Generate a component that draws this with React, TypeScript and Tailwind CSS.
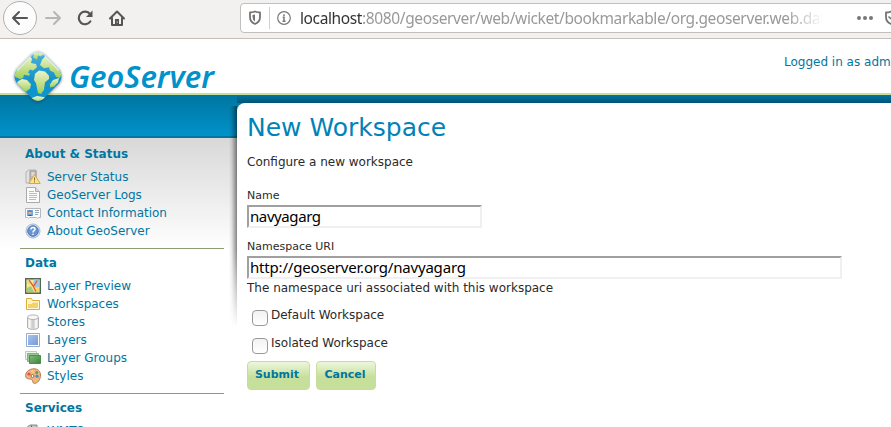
import React from "react";

const dejavu = "font-['DejaVu_Sans',sans-serif]";
const ubuntu = "font-['Noto_Sans','Open_Sans',sans-serif]";

const ServerIcon = () => (
  <svg width="16" height="16" viewBox="0 0 16 16">
    <path d="M1 3l3-2h7v11l-3 2H1z" fill="#e2e2e2" stroke="#b4b4b4" />
    <path d="M5 2h6v11H5z" fill="#c0c0c0" stroke="#999" />
    <path d="M6.500 4h3M6.500 6h3" stroke="#f3f3f3" />
    <path d="M9.500 5.500L15.200 14.500H3.800z" fill="#fde48a" stroke="#dda24a" />
    <path d="M9.500 8.500v3M9.500 12.200v1.200" stroke="#8a6526" />
  </svg>
);
const PageIcon = () => (
  <svg width="16" height="16" viewBox="0 0 16 16">
    <path d="M1.500.5h9l4 4v11h-13z" fill="#fbfbfb" stroke="#aaa" />
    <path d="M10.500.5v4h4" fill="#ddd" stroke="#aaa" />
    <path d="M4 4.500h5M4 6.500h8M4 8.500h8M4 10.500h8M4 12.500h7" stroke="#bbb" />
  </svg>
);
const CardIcon = () => (
  <svg width="16" height="16" viewBox="0 0 16 16">
    <path d="M.5 3.500h15v9h-2l-1 1-1-1h-7l-1 1-1-1h-2z" fill="#fafafa" stroke="#b4b8bd" />
    <path d="M2 5h6v6H2z" fill="#6ca8e8" />
    <circle cx="5" cy="7.500" r="1.600" fill="#e9b18e" />
    <path d="M3.500 6.700q1.500-2 3 0" stroke="#7d4a28" fill="none" />
    <path d="M2.800 11q2.200-2.500 4.400 0z" fill="#2b5b9e" />
    <path d="M10 5.500h4M10 7.500h4M10 9.500h3" stroke="#9aa6b3" />
  </svg>
);
const HelpIcon = () => (
  <svg width="16" height="16" viewBox="0 0 16 16">
    <circle cx="8" cy="8" r="7" fill="#dce8f8" stroke="#a5b7d1" />
    <circle cx="8" cy="8" r="5.300" fill="#6b94cf" stroke="#4b78b9" />
    <path d="M6 6.500q0-2 2-2t2 1.700q0 1-1.200 1.600Q8 8.300 8 9.500M8 10.700v1.300" fill="none" stroke="#fff" strokeWidth="1.500" />
  </svg>
);
const MapIcon = () => (
  <svg width="16" height="16" viewBox="0 0 16 16">
    <path d="M.7.7h14.600v14.600H.7z" fill="#f6e988" stroke="#536951" strokeWidth="1.400" />
    <path d="M2 2h4v4H2z" fill="#e0e38c" />
    <path d="M9 1.500h5.500v7L11 10 8 6z" fill="#a0c5e5" />
    <path d="M2 14v-4l4-2 3 6z" fill="#9dce7c" />
    <path d="M10 12l4-3v5h-4z" fill="#f5d75e" />
    <path d="M4 2.200l4.500 6.300M12.200 2.500L8.500 8.500l2.300 5" fill="none" stroke="#e4573d" strokeWidth="1.300" />
  </svg>
);
const FolderIcon = () => (
  <svg width="16" height="16" viewBox="0 0 16 16">
    <path d="M1.500 13.500v-11h5l1 2h7v9z" fill="#fff2bd" stroke="#dcac43" />
    <path d="M2.500 12.500v-5h4l1-1.500h6v6.500z" fill="#f6d263" stroke="#fffbe0" />
  </svg>
);
const StoreIcon = () => (
  <svg width="16" height="16" viewBox="0 0 16 16">
    <path d="M2.500 3v10q0 2.300 5.500 2.300t5.500-2.300V3" fill="#e6e6e6" stroke="#b0b0b0" />
    <path d="M4.500 5v9M11 5.500v8.500" stroke="#fafafa" strokeWidth="1.500" />
    <path d="M8 5.500v9" stroke="#cecece" strokeWidth="3" />
    <ellipse cx="8" cy="3.200" rx="5.500" ry="2.300" fill="#f8f8f8" stroke="#b4b4b4" />
  </svg>
);
const LayerIcon = () => (
  <svg width="16" height="16" viewBox="0 0 16 16">
    <defs><linearGradient id="layer" x2="1" y2="1"><stop stopColor="#a9c2ea" /><stop offset="1" stopColor="#769bd6" /></linearGradient></defs>
    <path d="M1.500 1.500h13v13h-13z" fill="#fff" stroke="#90acd9" />
    <path d="M3 3h10v10H3z" fill="url(#layer)" />
  </svg>
);
const GroupIcon = () => (
  <svg width="16" height="16" viewBox="0 0 16 16">
    <defs><linearGradient id="group" x2="1" y2="1"><stop stopColor="#88bb80" /><stop offset="1" stopColor="#39843a" /></linearGradient></defs>
    <path d="M.5 1.500h11v8H.5z" fill="#eaf4e7" stroke="#b4d2ad" />
    <path d="M2.500 3.500h11v8h-11z" fill="#9bc896" stroke="#80b47a" />
    <path d="M4.500 5.500h11v8h-11z" fill="url(#group)" stroke="#488f48" />
  </svg>
);
const PaletteIcon = () => (
  <svg width="16" height="16" viewBox="0 0 16 16">
    <path d="M9 .8c4 0 6.500 2.600 6.500 6.200 0 4.800-3 8.400-6 8.400-2.300 0-1.400-3.200-3-4C4.700 10.700.6 11.500.6 7.700.6 3.600 4.500.8 9 .8z" fill="#edb489" stroke="#c07a4c" />
    <circle cx="4" cy="6" r="1.600" fill="#e65142" />
    <circle cx="7.500" cy="3.500" r="1.400" fill="#f5d26b" />
    <circle cx="11.700" cy="4.500" r="1.600" fill="#54a957" />
    <circle cx="12" cy="8.200" r="1.600" fill="#468fc2" />
    <circle cx="10.800" cy="12" r="1.500" fill="#e9c74c" />
    <circle cx="7.500" cy="8" r="1.500" fill="#fff" stroke="#a8613e" />
  </svg>
);
const TilesIcon = () => (
  <svg width="16" height="16" viewBox="0 0 16 16">
    <path d="M1 5l4-3h7v12H1z" fill="#c4c4c4" stroke="#888" />
    <path d="M6.500 2.500v12M8 4.500h3M8 6.500h3" stroke="#666" />
    <path d="M3 5h3v8H3z" fill="#eee" />
  </svg>
);

type Item = [string, () => React.JSX.Element];
const sections: { title: string; items: Item[] }[] = [
  { title: "About & Status", items: [["Server Status", ServerIcon], ["GeoServer Logs", PageIcon], ["Contact Information", CardIcon], ["About GeoServer", HelpIcon]] },
  { title: "Data", items: [["Layer Preview", MapIcon], ["Workspaces", FolderIcon], ["Stores", StoreIcon], ["Layers", LayerIcon], ["Layer Groups", GroupIcon], ["Styles", PaletteIcon]] },
  { title: "Services", items: [["WMTS", TilesIcon]] },
];

function Shield({ checked = false }: { checked?: boolean }) {
  return (
    <svg width="14" height="16" viewBox="0 0 14 16" className="shrink-0">
      <path d="M7 1.500q2.500 1 5 1v4.500q0 5-5 7-5-2-5-7V2.500q2.500 0 5-1z" fill="none" stroke="#737373" strokeWidth="1.800" strokeLinejoin="round" />
      {checked ? <path d="M4.500 6.500l2 2 3.500-3" fill="none" stroke="#737373" strokeWidth="1.500" /> : <path d="M7 4.500v7q-2.500-1.500-2.500-5V5z" fill="#737373" />}
    </svg>
  );
}

function Toolbar() {
  return (
    <div className="flex h-[39px] shrink-0 border-b border-[#c8beb8] bg-[#f2f1f0]">
      <svg width="240" height="38" viewBox="0 0 240 38" fill="none" className="shrink-0">
        <circle cx="20" cy="18" r="16.500" fill="#fcfcfc" stroke="#b2b0ae" />
        <g strokeWidth="2" strokeLinecap="round" strokeLinejoin="round">
          <path d="M27 18H13M19 12l-6 6 6 6" stroke="#555" />
          <path d="M46 18h14M54 12l6 6-6 6" stroke="#b7b6b5" />
        </g>
        <path d="M90 14a6.300 6.300 0 1 0 .3 7.500" stroke="#555" strokeWidth="2.200" strokeLinecap="round" />
        <path d="M92.500 10.500v6.500H86z" fill="#555" />
        <path d="M110 18.500l7-7 7 7M112 17.500V25h10v-7.500" stroke="#555" strokeWidth="2" strokeLinecap="round" strokeLinejoin="round" />
        <path d="M115 25v-6h4v6z" fill="#555" />
        <path d="M117.200 21.500v1.200" stroke="#eee" />
      </svg>
      <div className="mt-[3px] flex h-[30px] w-[700px] shrink-0 items-center rounded-[4px] border border-[#c1bebb] bg-white pl-[7px]">
        <Shield />
        <div className="ml-[7px] h-[22px] w-px bg-[#d0d0d0]" />
        <svg width="14" height="14" viewBox="0 0 14 14" fill="none" stroke="#777" className="ml-[7px] shrink-0">
          <circle cx="7" cy="7" r="6.300" strokeWidth="1.200" />
          <path d="M7 3.200v1.700M5.700 6.200H7v4M5.500 10.200h3" strokeWidth="1.500" />
        </svg>
        <div className={`ml-[9px] w-[523px] shrink-0 whitespace-nowrap text-[15.5px] leading-[26px] tracking-[-0.38px] text-[#999] ${ubuntu} [mask-image:linear-gradient(to_right,black_93%,transparent)]`}>
          <span className="text-[#333]">localhost</span>:8080/geoserver/web/wicket/bookmarkable/org.geoserver.web.dat
        </div>
        <svg width="16" height="6" viewBox="0 0 16 6" fill="#777" className="ml-[34px] shrink-0"><circle cx="2" cy="3" r="2" /><circle cx="8" cy="3" r="2" /><circle cx="14" cy="3" r="2" /></svg>
        <div className="ml-[11px]"><Shield checked /></div>
      </div>
    </div>
  );
}

function Globe() {
  return (
    <svg width="56" height="62" viewBox="0 0 56 58" preserveAspectRatio="none" className="shrink-0">
      <defs>
        <linearGradient id="ocean" x2="0" y2="1"><stop stopColor="#55b7dc" /><stop offset=".5" stopColor="#1593cc" /><stop offset="1" stopColor="#0797d3" /></linearGradient>
        <linearGradient id="land" x2="0" y2="1"><stop stopColor="#edf3c9" /><stop offset="1" stopColor="#a0cf58" /></linearGradient>
        <clipPath id="diamond"><path d="M22 6q6-4 12 0l15 14q5 7 0 13L34 47q-6 5-12 0L7 33q-5-6 0-13z" /></clipPath>
        <filter id="shade" x="-20%" y="-20%" width="140%" height="140%"><feDropShadow dx="0" dy=".5" stdDeviation="1.500" floodColor="#333" floodOpacity=".7" /></filter>
      </defs>
      <g filter="url(#shade)">
        <g clipPath="url(#diamond)">
          <path d="M0 0h56v58H0z" fill="url(#ocean)" />
          <g fill="url(#land)">
            <path d="M21 5l3-2h7l3 2-3 3-3-1-1 4-4-2 1-3z" />
            <path d="M5 21L16 10l4-2 2 2-1 4 5 1 1 3-4 3-3-1-2 3 2 1-1 2-5-1-1 3-3 1-5-2z" />
            <path d="M8 31l4-2 5 1 4 4-1 4-4 3-3-1-6-7z" />
            <path d="M25 24l4-3 6 1 4 4 0 3-4 3-1 7-3 4-3-1-2-9-2-3z" />
            <path d="M30 16l2-5 4-4 16 16-2 5-4-1-2-4-4-2-1-3-5 1z" />
            <path d="M40 34l3-4 6-2-1 4-4 4-4 1z" />
            <path d="M21 47l6-2 8 1-3 4-4 1z" />
          </g>
          <path d="M7 21L22 6q6-4 12 0l15 15" fill="none" stroke="#e7f8ff" strokeOpacity=".6" strokeWidth="2" />
        </g>
      </g>
    </svg>
  );
}

function Sidebar() {
  return (
    <nav className="h-[289px] w-[237px] shrink-0 overflow-hidden bg-[linear-gradient(to_bottom,#d8d8d8,#fff_112px)] pl-5 pr-[13px] pt-[2px]">
      {sections.map((s) => (
        <section key={s.title} className="border-b border-[#8e9c74] pb-2 pl-[5px]">
          <h2 className="h-[28px] pt-[5px] text-[12px] font-bold leading-[18px] text-[#0076a1]">{s.title}</h2>
          {s.items.map(([label, Icon]) => (
            <a key={label} className="flex h-[18px] items-center gap-[6px] whitespace-nowrap text-[12px] text-[#0076a1]"><Icon />{label}</a>
          ))}
        </section>
      ))}
    </nav>
  );
}

const inset = "border-2 border-b-[#f0f0f0] border-l-[#a0a0a0] border-r-[#f0f0f0] border-t-[#a0a0a0] bg-white";

function Check({ label }: { label: string }) {
  return (
    <label className="flex h-[28px] items-start gap-[3px] pl-[5px]">
      <span className="mt-[4px] h-[16px] w-[16px] rounded-[4px] border border-[#999] bg-[linear-gradient(#f2f2f2,#fff)]" />
      <span className="leading-[18px]">{label}</span>
    </label>
  );
}

function Workspace() {
  return (
    <main className="relative w-[654px] shrink-0 rounded-tl-[8px] bg-white pl-[10px] text-[12px] text-[#2a2a2a]">
      <div className="absolute -left-[8px] top-[3px] h-[221px] w-[8px] bg-[linear-gradient(to_right,transparent,#00000018_35%,#00000078)] [mask-image:linear-gradient(black_65%,transparent)]" />
      <h1 className="h-[50px] pt-[8px] text-[25px] leading-[34px] text-[#0083b7]">New Workspace</h1>
      <p className="h-[34px] leading-[18px]">Configure a new workspace</p>
      <label className="block h-[18px] pt-[3px] text-[11px] leading-[12px]">Name</label>
      <div className={`h-[23px] w-[235px] pl-px text-[15px] leading-[19px] tracking-[-0.4px] text-black ${ubuntu} ${inset}`}>navyagarg</div>
      <label className="block h-[28px] pt-[12px] text-[11px] leading-[14px]">Namespace URI</label>
      <div className={`h-[23px] w-[595px] pl-px text-[15px] leading-[19px] tracking-[-0.18px] text-black ${ubuntu} ${inset}`}>http://geoserver.org/navyagarg</div>
      <p className="mb-[9px] h-[18px] leading-[18px]">The namespace uri associated with this workspace</p>
      <Check label="Default Workspace" />
      <Check label="Isolated Workspace" />
      <div className="-mt-px flex gap-[6px] text-[11px] font-bold text-[#0076a1]">
        <button className="h-[29px] w-[63px] rounded-[4px] border border-[#c6de9a] bg-[linear-gradient(#eef6dc,#c6e09b_55%)] pr-[3px]">Submit</button>
        <button className="h-[29px] w-[60px] rounded-[4px] border border-[#c6de9a] bg-[linear-gradient(#eef6dc,#c6e09b_55%)] pr-[2px]">Cancel</button>
      </div>
    </main>
  );
}

export default function App() {
  return (
    <div className={`flex h-[427px] w-[891px] flex-col overflow-hidden bg-white ${dejavu}`}>
      <Toolbar />
      <header className="relative z-10 flex h-[56px] shrink-0 justify-between border-b-2 border-[#c6e09b]">
        <div className="flex items-start pl-[10px] pt-[9px]">
          <Globe />
          <svg width="154" height="40" viewBox="0 0 154 40" className="mt-[11px] shrink-0 overflow-visible">
            <text x="3" y="29" textLength="145" lengthAdjust="spacingAndGlyphs" fontFamily="Noto Sans, Open Sans, sans-serif" fontSize="30" fontWeight="600" fontStyle="italic" fill="#0092ca">GeoServer</text>
          </svg>
        </div>
        <span className="w-[107px] shrink-0 whitespace-nowrap pt-[14px] text-[12px] leading-[18px] text-[#0076a1]">Logged in as adm</span>
      </header>
      <div className="flex h-[332px] bg-[linear-gradient(#0076a1,#0092ca_41px,#0076a1_41px,#0076a1_43px,white_43px)]">
        <div className="flex w-[237px] shrink-0 flex-col pt-[43px]"><Sidebar /></div>
        <div className="flex w-[654px] shrink-0 bg-[linear-gradient(#0076a1,#005477_8px,#007bad_8px,#0085ba_20px,white_20px)] pt-[8px]"><Workspace /></div>
      </div>
    </div>
  );
}
